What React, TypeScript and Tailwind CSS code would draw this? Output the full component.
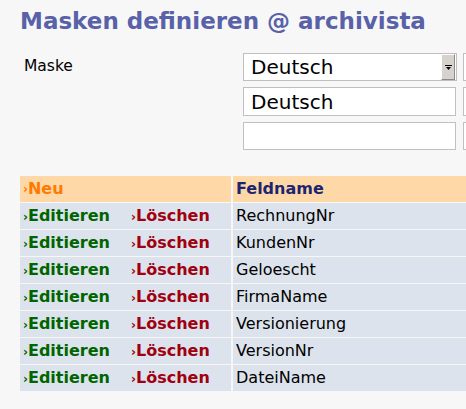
import React from "react";

const rows = ["RechnungNr", "KundenNr", "Geloescht", "FirmaName", "Versionierung", "VersionNr", "DateiName"];

export default function App() {
  return (
    <div
      className="w-[466px] h-[409px] overflow-hidden bg-[#f7f7f7] text-black"
      style={{ fontFamily: '"DejaVu Sans", Verdana, sans-serif' }}
    >
      <h1 className="pl-[20px] pt-[7px] text-[23px] leading-[28px] font-bold text-[#5961a8] whitespace-nowrap">
        Masken definieren @ archivista
      </h1>
      <div className="flex mt-[18px] w-[600px]">
        <div className="w-[243px] pl-[24px] pt-[3px] text-[15.5px] leading-[20px]">Maske</div>
        <div className="flex flex-col gap-[6px]">
          <div className="flex gap-[6px]">
            <div className="w-[214px] h-[28px] border border-[#c0c0c0] bg-white flex items-center">
              <span className="flex-1 pl-[7px] text-[20px] leading-[24px]">Deutsch</span>
              <div className="w-[14px] h-[26px] mr-[1px] bg-[#d6d3ce] border-r border-b border-[#8a8a8a] border-t border-l border-t-white border-l-white flex items-center justify-center">
                <svg width="7" height="5" viewBox="0 0 7 5">
                  <rect x="0" y="0" width="7" height="1" fill="#000" />
                  <polygon points="1,2 6,2 3.5,5" fill="#000" />
                </svg>
              </div>
            </div>
            <div className="w-[60px] h-[28px] border border-[#c0c0c0] bg-white" />
          </div>
          <div className="flex gap-[7px]">
            <div className="w-[213px] h-[29px] border border-[#c0c0c0] bg-white flex items-center">
              <span className="pl-[7px] text-[20px] leading-[24px]">Deutsch</span>
            </div>
            <div className="w-[60px] h-[29px] border border-[#c0c0c0] bg-white" />
          </div>
          <div className="flex gap-[7px]">
            <div className="w-[213px] h-[28px] border border-[#c0c0c0] bg-white" />
            <div className="w-[60px] h-[28px] border border-[#c0c0c0] bg-white" />
          </div>
        </div>
      </div>
      <div className="mt-[26px] ml-[20px] w-[600px] flex flex-col gap-[1px]">
        <div className="flex gap-[2px] h-[26px]">
          <div className="w-[211px] bg-[#ffd8a8] pl-[3px] flex items-center text-[16px] font-bold text-[#ff7a00]">
            <span className="text-[12px]">›</span>Neu
          </div>
          <div className="flex-1 bg-[#ffd8a8] pl-[3px] flex items-center text-[16px] font-bold text-[#1c2670]">
            Feldname
          </div>
        </div>
        {rows.map((r) => (
          <div key={r} className="flex gap-[2px] h-[26px]">
            <div className="w-[211px] bg-[#dce3ec] pl-[3px] flex items-center text-[16px] font-bold">
              <span className="w-[108px] text-[#006400]">
                <span className="text-[12px]">›</span>Editieren
              </span>
              <span className="text-[#a00010]">
                <span className="text-[12px]">›</span>Löschen
              </span>
            </div>
            <div className="flex-1 bg-[#dce3ec] pl-[3px] flex items-center text-[16px]">{r}</div>
          </div>
        ))}
      </div>
    </div>
  );
}
